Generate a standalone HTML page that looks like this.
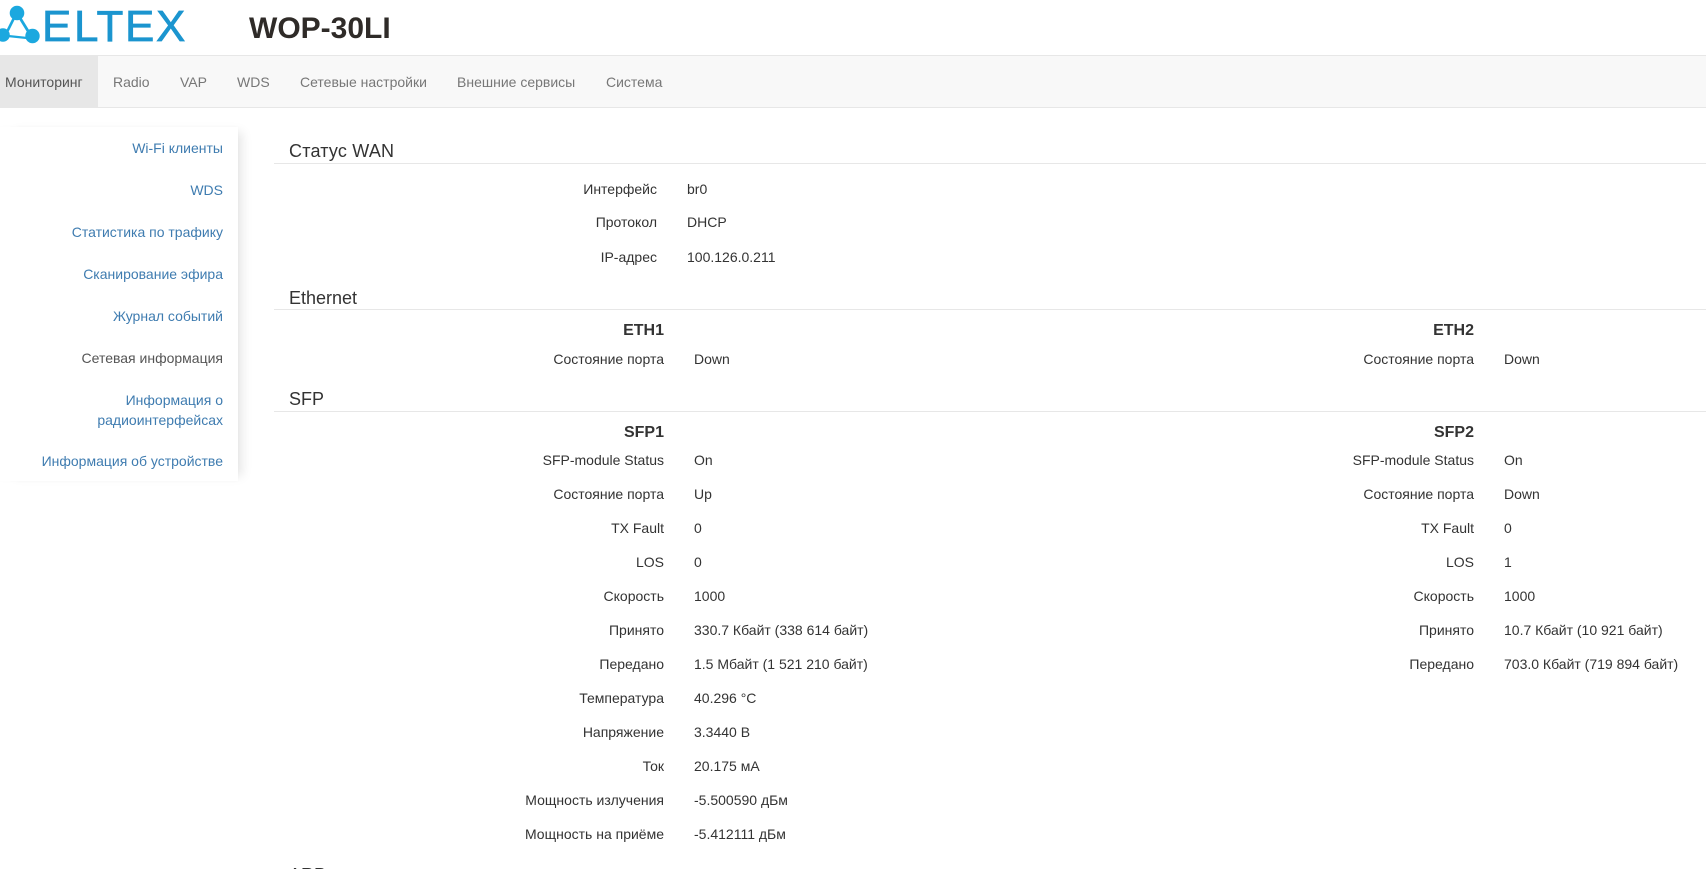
<!DOCTYPE html>
<html lang="ru">
<head>
<meta charset="utf-8">
<title>WOP-30LI</title>
<style>
html,body{margin:0;padding:0;background:#fff;width:1706px;height:869px;overflow:hidden}
body{font-family:"Liberation Sans",sans-serif;font-size:14px;color:#333}
#p{position:absolute;left:0;top:0;width:1706px;height:869px;overflow:hidden;background:#fff}
#p div,#p span,#p a{position:absolute;white-space:nowrap;line-height:20px}
a{text-decoration:none}
#nav{left:0;top:55px;width:1706px;height:51px;background:#f8f8f8;border-top:1px solid #e7e7e7;border-bottom:1px solid #e7e7e7}
#act{left:0;top:0;width:98px;height:51px;background:#e7e7e7}
#nav a{top:16px;color:#777}
#side{left:0;top:127px;width:238px;height:354px;background:#fff;box-shadow:9px 0 10px -5px rgba(0,0,0,.1),0 0 3px rgba(0,0,0,.02)}
.s{right:1483px;color:#3f7cb0}
.h{left:289px;font-size:18px;color:#333}
.r{left:274px;width:1432px;height:1px;background:#e7e7e7}
.a{right:1049px}.v{left:687px}
.b{font-weight:bold;font-size:16px}
.l1{right:1042px}.v1{left:694px}
.l2{right:232px}.v2{left:1504px}
</style>
</head>
<body>
<div id="p">
<svg style="position:absolute;left:0;top:0" width="200" height="55" viewBox="0 0 200 55">
<g stroke="#1ba8df" fill="none" stroke-linecap="round"><path d="M14 18L8 30" stroke-width="2.6"/><path d="M20 18L28 31" stroke-width="2.8"/><path d="M8 36L27 38" stroke-width="2.2"/></g>
<g fill="#1ba8df"><circle cx="17" cy="13" r="7.3"/><circle cx="32.5" cy="36" r="7.2"/><circle cx="3" cy="35" r="6.8"/></g>
<text y="41" x="42 74 96.5 125 156" font-family="Liberation Sans" font-size="44" fill="#1b95cf" stroke="#1b95cf" stroke-width=".7">ELTEX</text>
</svg>
<div style="left:249px;top:14px;font-size:30px;font-weight:bold;line-height:30px;color:#2f2b28">WOP-30LI</div>

<div id="nav"><div id="act"></div>
<a style="left:5px;color:#555">Мониторинг</a>
<a style="left:113px">Radio</a>
<a style="left:180px">VAP</a>
<a style="left:237px">WDS</a>
<a style="left:300px">Сетевые настройки</a>
<a style="left:457px">Внешние сервисы</a>
<a style="left:606px">Система</a>
</div>

<div id="side"></div>
<a class="s" style="top:138px">Wi-Fi клиенты</a>
<a class="s" style="top:180px">WDS</a>
<a class="s" style="top:222px">Статистика по трафику</a>
<a class="s" style="top:264px">Сканирование эфира</a>
<a class="s" style="top:306px">Журнал событий</a>
<a class="s" style="top:348px;color:#555">Сетевая информация</a>
<a class="s" style="top:390px">Информация о</a>
<a class="s" style="top:410px">радиоинтерфейсах</a>
<a class="s" style="top:451px">Информация об устройстве</a>

<div class="h" style="top:141px;letter-spacing:.2px">Статус WAN</div><div class="r" style="top:163px"></div>
<span class="a" style="top:179px">Интерфейс</span><span class="v" style="top:179px">br0</span>
<span class="a" style="top:212px">Протокол</span><span class="v" style="top:212px">DHCP</span>
<span class="a" style="top:247px">IP-адрес</span><span class="v" style="top:247px">100.126.0.211</span>

<div class="h" style="top:288px">Ethernet</div><div class="r" style="top:309px"></div>
<span class="l1 b" style="top:321px">ETH1</span><span class="l2 b" style="top:321px">ETH2</span>
<span class="l1" style="top:349px">Состояние порта</span><span class="v1" style="top:349px">Down</span>
<span class="l2" style="top:349px">Состояние порта</span><span class="v2" style="top:349px">Down</span>

<div class="h" style="top:389px">SFP</div><div class="r" style="top:411px"></div>
<span class="l1 b" style="top:423px">SFP1</span><span class="l2 b" style="top:423px">SFP2</span>

<span class="l1" style="top:450px">SFP-module Status</span><span class="v1" style="top:450px">On</span>
<span class="l2" style="top:450px">SFP-module Status</span><span class="v2" style="top:450px">On</span>
<span class="l1" style="top:484px">Состояние порта</span><span class="v1" style="top:484px">Up</span>
<span class="l2" style="top:484px">Состояние порта</span><span class="v2" style="top:484px">Down</span>
<span class="l1" style="top:518px">TX Fault</span><span class="v1" style="top:518px">0</span>
<span class="l2" style="top:518px">TX Fault</span><span class="v2" style="top:518px">0</span>
<span class="l1" style="top:552px">LOS</span><span class="v1" style="top:552px">0</span>
<span class="l2" style="top:552px">LOS</span><span class="v2" style="top:552px">1</span>
<span class="l1" style="top:586px">Скорость</span><span class="v1" style="top:586px">1000</span>
<span class="l2" style="top:586px">Скорость</span><span class="v2" style="top:586px">1000</span>
<span class="l1" style="top:620px">Принято</span><span class="v1" style="top:620px">330.7 Кбайт (338 614 байт)</span>
<span class="l2" style="top:620px">Принято</span><span class="v2" style="top:620px">10.7 Кбайт (10 921 байт)</span>
<span class="l1" style="top:654px">Передано</span><span class="v1" style="top:654px">1.5 Мбайт (1 521 210 байт)</span>
<span class="l2" style="top:654px">Передано</span><span class="v2" style="top:654px">703.0 Кбайт (719 894 байт)</span>
<span class="l1" style="top:688px">Температура</span><span class="v1" style="top:688px">40.296 °C</span>
<span class="l1" style="top:722px">Напряжение</span><span class="v1" style="top:722px">3.3440 В</span>
<span class="l1" style="top:756px">Ток</span><span class="v1" style="top:756px">20.175 мА</span>
<span class="l1" style="top:790px">Мощность излучения</span><span class="v1" style="top:790px">-5.500590 дБм</span>
<span class="l1" style="top:824px">Мощность на приёме</span><span class="v1" style="top:824px">-5.412111 дБм</span>

<div class="h" style="top:865px">ARP</div>
</div>
</body>
</html>
